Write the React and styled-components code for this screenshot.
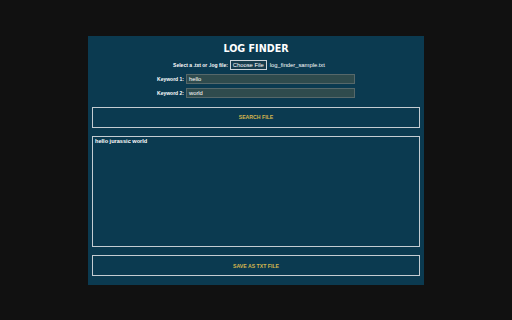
import React from "react";
import styled, { createGlobalStyle } from "styled-components";

const Global = createGlobalStyle`
  html, body { margin: 0; padding: 0; background: #111111; }
  body { font-family: "Liberation Sans", "Noto Sans", sans-serif; }
`;

const Page = styled.div`
  width: 512px;
  height: 320px;
  display: flex;
  justify-content: center;
  padding-top: 36px;
  box-sizing: border-box;
`;

const Panel = styled.div`
  width: 336px;
  height: 249px;
  background: #0b3a50;
  box-sizing: border-box;
  padding: 6px 4px 9px;
  display: flex;
  flex-direction: column;
`;

const Title = styled.h1`
  margin: 0;
  color: #ffffff;
  font-family: "DejaVu Sans", sans-serif;
  font-size: 9.6px;
  font-weight: bold;
  text-align: center;
  line-height: 13px;
`;

const Row = styled.div`
  display: flex;
  justify-content: center;
  align-items: center;
  gap: 2px;
  margin-top: ${(p) => p.$mt || 4}px;
  padding-right: ${(p) => p.$pr || 0}px;
  height: 10px;
`;

const Label = styled.span`
  color: #ffffff;
  font-size: 5px;
  font-weight: bold;
  white-space: nowrap;
`;

const FileButton = styled.span`
  display: inline-block;
  box-sizing: border-box;
  height: 10px;
  line-height: 8px;
  padding: 0 2px;
  border: 1px solid #cfd6da;
  background: #173c4c;
  color: #ffffff;
  font-size: 5.8px;
  margin-right: 1px;
`;

const FileName = styled.span`
  color: #ffffff;
  font-size: 5.8px;
`;

const Input = styled.div`
  box-sizing: border-box;
  width: 169px;
  height: 10px;
  background: #2f4b4d;
  border: 1px solid #56686a;
  color: #ffffff;
  font-size: 5.8px;
  line-height: 8px;
  padding-left: 2px;
`;

const Button = styled.div`
  box-sizing: border-box;
  height: 21px;
  margin-top: ${(p) => p.$mt}px;
  border: 1.5px solid #c4ccd2;
  display: flex;
  align-items: center;
  justify-content: center;
  color: #d6b74e;
  font-size: 5.2px;
  font-weight: bold;
`;

const Output = styled.div`
  box-sizing: border-box;
  height: 112px;
  margin-top: 8px;
  border: 1.5px solid #c4ccd2;
  padding: 1px 2px;
  color: #ffffff;
  font-size: 5.6px;
  font-weight: bold;
`;

export default function App() {
  return (
    <>
      <Global />
      <Page>
        <Panel>
          <Title>LOG FINDER</Title>
          <Row $mt={5} $pr={14}>
            <Label>Select a .txt or .log file:</Label>
            <FileButton>Choose File</FileButton>
            <FileName>log_finder_sample.txt</FileName>
          </Row>
          <Row $mt={4}>
            <Label>Keyword 1:</Label>
            <Input>hello</Input>
          </Row>
          <Row $mt={4}>
            <Label>Keyword 2:</Label>
            <Input>world</Input>
          </Row>
          <Button $mt={9}>SEARCH FILE</Button>
          <Output>hello jurassic world</Output>
          <Button $mt={8}>SAVE AS TXT FILE</Button>
        </Panel>
      </Page>
    </>
  );
}
